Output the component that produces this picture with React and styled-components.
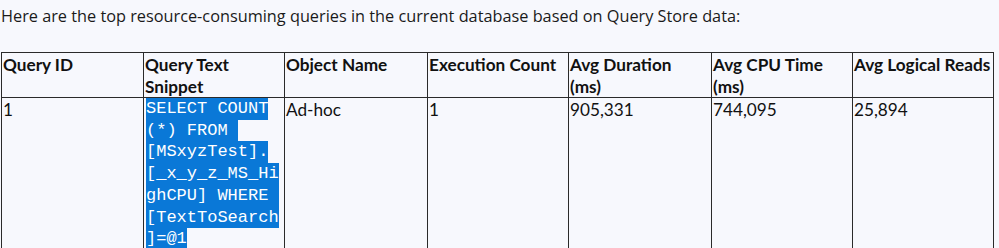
import React from 'react';
import styled, { createGlobalStyle } from 'styled-components';

const GlobalStyle = createGlobalStyle`
  html, body {
    margin: 0;
    padding: 0;
    background: #f7f8fd;
  }
`;

const Page = styled.div`
  width: 999px;
  height: 248px;
  overflow: hidden;
  background: #f7f8fd;
  color: #111;
`;

const Intro = styled.p`
  margin: 0;
  padding: 2px 0 0 1px;
  height: 52px;
  box-sizing: border-box;
  font-family: 'Open Sans', sans-serif;
  font-size: 16.3px;
  line-height: 28px;
  color: #1a1a1a;
`;

const Grid = styled.div`
  display: grid;
  grid-template-columns: ${(p) => p.$cols};
  margin-left: 1px;
  width: fit-content;
  border-left: 1px solid #2a2a2a;
  border-top: 1px solid #2a2a2a;
  font-family: Lato, 'Open Sans', sans-serif;
  font-size: 17.2px;
  line-height: 21.7px;
`;

const Cell = styled.div`
  border-right: 1px solid #2a2a2a;
  border-bottom: 1px solid #2a2a2a;
  padding: 1px 1px 0;
  height: ${(p) => (p.$head ? '43px' : '160px')};
  font-weight: ${(p) => (p.$head ? 700 : 400)};
  white-space: nowrap;
  box-sizing: content-box;
  overflow: hidden;
`;

const Code = styled.div`
  font-family: 'Liberation Mono', 'DejaVu Sans Mono', monospace;
  font-size: 17px;
  line-height: 21.7px;
  padding-left: 1px;
  margin-top: -1px;
`;

const HighlightLine = styled.div`
  width: fit-content;
  white-space: pre;
  background: #0a78d7;
  color: #fff;
`;

const headers = [
  ['Query ID'],
  ['Query Text', 'Snippet'],
  ['Object Name'],
  ['Execution Count'],
  ['Avg Duration', '(ms)'],
  ['Avg CPU Time', '(ms)'],
  ['Avg Logical Reads'],
];

const widths = [141, 140, 142, 140, 142, 140, 140];

const queryLines = [
  'SELECT COUNT',
  '(*) FROM ',
  '[MSxyzTest].',
  '[_x_y_z_MS_Hi',
  'ghCPU] WHERE ',
  '[TextToSearch',
  ']=@1',
];

export default function App() {
  const cols = widths.map((w) => `${w + 1}px`).join(' ');
  return (
    <Page>
      <GlobalStyle />
      <Intro>
        Here are the top resource-consuming queries in the current database based on Query Store data:
      </Intro>
      <Grid $cols={cols}>
        {headers.map((lines) => (
          <Cell $head key={lines.join(' ')}>
            {lines.map((l, i) => (
              <React.Fragment key={i}>
                {i > 0 && <br />}
                {l}
              </React.Fragment>
            ))}
          </Cell>
        ))}
        <Cell>1</Cell>
        <Cell>
          <Code>
            {queryLines.map((line, i) => (
              <HighlightLine key={i}>{line}</HighlightLine>
            ))}
          </Code>
        </Cell>
        <Cell>Ad-hoc</Cell>
        <Cell>1</Cell>
        <Cell>905,331</Cell>
        <Cell>744,095</Cell>
        <Cell>25,894</Cell>
      </Grid>
    </Page>
  );
}
